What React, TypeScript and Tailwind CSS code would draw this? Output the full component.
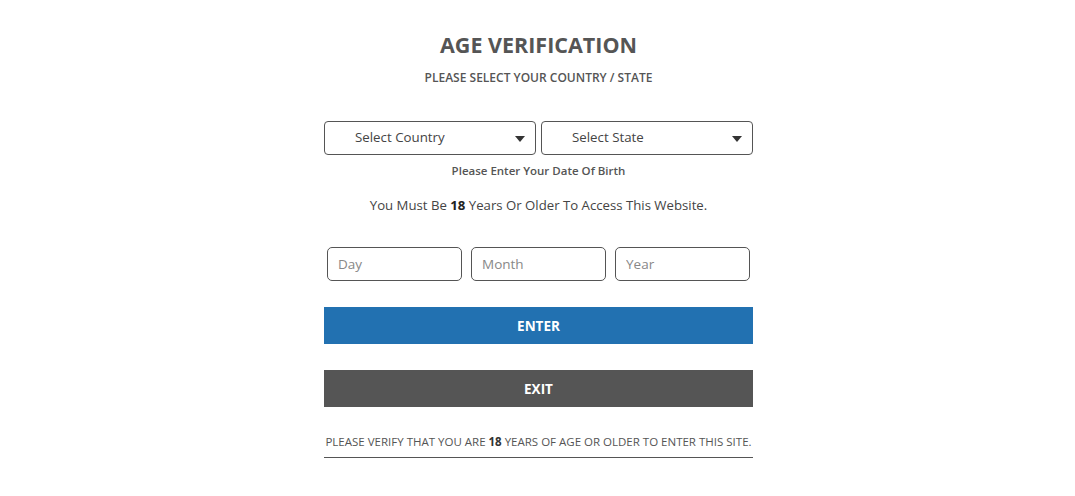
const font = { fontFamily: '"Open Sans", "Noto Sans", sans-serif' };

const Select = ({ label }: { label: string }) => (
  <div className="relative flex h-[34px] flex-1 items-center rounded-[4px] border border-[#555] pl-[30px] text-[13.3px] text-[#444]">
    <span>{label}</span>
    <span className="absolute right-[10px] top-[14px] h-0 w-0 border-x-[5px] border-t-[6px] border-x-transparent border-t-[#333]" />
  </div>
);

const DateInput = ({ placeholder }: { placeholder: string }) => (
  <input
    className="h-[34px] w-[135px] rounded-[5px] border border-[#555] px-[10px] text-[13.5px] text-[#444] outline-none placeholder:text-[#888]"
    placeholder={placeholder}
  />
);

export default function App() {
  return (
    <div className="flex min-h-[496px] w-full justify-center bg-white" style={font}>
      <div className="ml-[2px] flex w-[429px] flex-col items-center pt-[31px]">
        <h1 className="text-[21.5px] font-bold leading-[28px] text-[#555]">AGE VERIFICATION</h1>
        <p className="mt-[9px] text-[12px] font-semibold leading-[20px] text-[#555]">
          PLEASE SELECT YOUR COUNTRY / STATE
        </p>

        <div className="mt-[33px] flex w-full gap-[5px]">
          <Select label="Select Country" />
          <Select label="Select State" />
        </div>

        <p className="mt-[6px] text-[11.5px] font-semibold leading-[20px] text-[#555]">
          Please Enter Your Date Of Birth
        </p>
        <p className="mt-[14px] text-[13.2px] leading-[20px] text-[#444]">
          You Must Be <b className="font-bold text-[#222]">18</b> Years Or Older To Access This Website.
        </p>

        <div className="mt-[32px] flex w-full justify-between px-[3px]">
          <DateInput placeholder="Day" />
          <DateInput placeholder="Month" />
          <DateInput placeholder="Year" />
        </div>

        <button className="mt-[26px] flex h-[37px] w-full items-center justify-center bg-[#2271b1] pt-[2px] text-[13.5px] font-bold text-white">
          ENTER
        </button>
        <button className="mt-[26px] flex h-[37px] w-full items-center justify-center bg-[#555] pt-[2px] text-[13.5px] font-bold text-white">
          EXIT
        </button>

        <p className="mt-[25px] w-full border-b border-[#555] pb-[5px] text-center text-[11.5px] leading-[20px] text-[#555]">
          PLEASE VERIFY THAT YOU ARE <b className="font-bold text-[#333]">18</b> YEARS OF AGE OR OLDER TO ENTER THIS SITE.
        </p>
      </div>
    </div>
  );
}
